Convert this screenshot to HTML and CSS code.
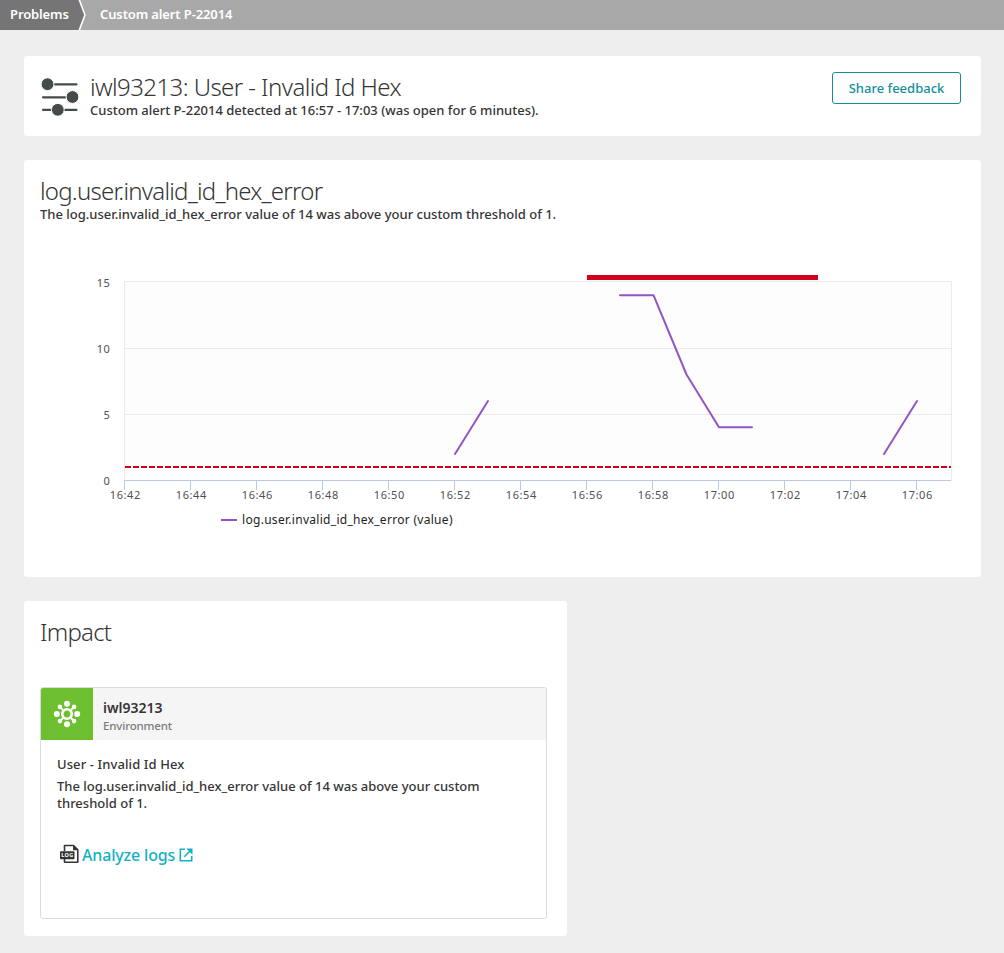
FILE: index.html
```html
<!DOCTYPE html>
<html lang="en">
<head>
<meta charset="utf-8">
<title>Custom alert P-22014</title>
<link rel="stylesheet" href="styles.css">
</head>
<body>
<nav class="crumbs">
  <a class="crumb crumb-root">Problems</a>
  <svg class="crumb-arrow" width="10" height="30" viewBox="0 0 10 30"><path d="M0 0H2L8 15L2 30H0Z" fill="#757575"/><path d="M1 -1L7 15L1 31" fill="none" stroke="#fff" stroke-width="1.7"/></svg>
  <span class="crumb crumb-current">Custom alert P-22014</span>
</nav>
<main class="page">
  <section class="card header">
    <svg class="header-icon" width="38" height="40" viewBox="0 0 38 40"><g stroke="#454b4b" stroke-width="2.2" stroke-linecap="round"><path d="M8 8.3H35.5M2 21.3H32M2 33.8H35.5"/></g><g fill="#454b4b" stroke="#fff" stroke-width="1"><circle cx="6.5" cy="8.2" r="6.4"/><circle cx="31.5" cy="21" r="6.4"/><circle cx="16.8" cy="33.8" r="6.4"/></g></svg>
    <div class="header-text">
      <h1 class="title title-main">iwl93213: User - Invalid Id Hex</h1>
      <p class="text text-detected">Custom alert P-22014 detected at 16:57 - 17:03 (was open for 6 minutes).</p>
    </div>
    <button class="feedback">Share feedback</button>
  </section>

  <section class="card metric">
    <h2 class="title title-metric">log.user.invalid_id_hex_error</h2>
    <p class="text text-metric">The log.user.invalid_id_hex_error value of 14 was above your custom threshold of 1.</p>
    <svg class="chart" width="957" height="290" viewBox="24 257 957 290">
      <rect x="124.500" y="281.500" width="827" height="199" fill="#fdfdfd" stroke="#ebebeb"/>
      <path d="M125 348.500H951M125 414.500H951" stroke="#ebebeb"/>
      <path d="M124 480.500H951M124.500 480V490M190.500 480V490M256.500 480V490M322.500 480V490M388.500 480V490M454.500 480V490M520.500 480V490M586.500 480V490M652.500 480V490M718.500 480V490M784.500 480V490M850.500 480V490M916.500 480V490" stroke="#b9c9e6"/>
      <path d="M125 467H951" stroke="#d0021b" stroke-width="2" stroke-dasharray="6 2"/>
      <rect x="587" y="275" width="231" height="5" fill="#d0021b"/>
      <g fill="none" stroke="#9355c1" stroke-width="2" stroke-linejoin="round" stroke-linecap="round">
        <path d="M455 454L488 401"/><path d="M620 295.200H653.500L686.500 374.500L719 427.300H752"/><path d="M884 454L917 401"/>
      </g>
      <g class="axis" text-anchor="end"><text x="110" y="287">15</text><text x="110" y="353">10</text><text x="110" y="419">5</text><text x="110" y="485">0</text></g>
      <g class="axis axis-time" text-anchor="middle"><text x="125.300" y="499">16:42</text><text x="191.300" y="499">16:44</text><text x="257.300" y="499">16:46</text><text x="323.300" y="499">16:48</text><text x="389.300" y="499">16:50</text><text x="455.300" y="499">16:52</text><text x="521.300" y="499">16:54</text><text x="587.300" y="499">16:56</text><text x="653.300" y="499">16:58</text><text x="719.300" y="499">17:00</text><text x="785.300" y="499">17:02</text><text x="851.300" y="499">17:04</text><text x="917.300" y="499">17:06</text></g>
      <path d="M221 520H237" stroke="#9355c1" stroke-width="2"/>
      <text class="legend" x="242" y="524" textLength="210.500">log.user.invalid_id_hex_error (value)</text>
    </svg>
  </section>

  <section class="card impact">
    <h2 class="title title-impact">Impact</h2>
    <article class="entity">
      <header class="entity-head">
        <div class="entity-icon"><svg width="28" height="28" viewBox="-14 -14 28 28"><g stroke="#fff" stroke-width="1.800"><path d="M-7 -7L7 7M7 -7L-7 7"/></g><circle r="4.800" fill="#6dbf30" stroke="#fff" stroke-width="2.600"/><g fill="#fff"><circle cy="-10.200" r="3"/><circle cy="10.200" r="3"/><circle cx="-10.200" r="3"/><circle cx="10.200" r="3"/><circle cx="-7.100" cy="-7.100" r="2.300"/><circle cx="7.100" cy="-7.100" r="2.300"/><circle cx="-7.100" cy="7.100" r="2.300"/><circle cx="7.100" cy="7.100" r="2.300"/></g></svg></div>
        <div class="entity-label"><div class="entity-name">iwl93213</div><div class="entity-type">Environment</div></div>
      </header>
      <div class="entity-body">
        <p class="text text-event">User - Invalid Id Hex</p>
        <p class="text text-reason">The log.user.invalid_id_hex_error value of 14 was above your custom<br><span class="text-reason-end">threshold of 1.</span></p>
        <a class="logs">
          <svg class="logs-icon" width="19" height="20" viewBox="0 0 19 20"><path d="M4.500 7V1.500H13.500L17.800 5.800V18.300H4.500V15" fill="none" stroke="#353535" stroke-width="1.600" stroke-linejoin="round"/><path d="M13 1L18.300 6.300H13Z" fill="#353535"/><rect y="7.200" width="14.500" height="8" rx="1" fill="#353535"/><text class="log-badge" x="1.300" y="13.400" textLength="12">LOG</text></svg>
          <span class="logs-label">Analyze logs</span>
          <svg width="14" height="14" viewBox="0 0 14 14"><path d="M6 1.300H1.300V12.700H12.700V8M5.300 8.700L11 3" fill="none" stroke="#14b0c6" stroke-width="1.600"/><path d="M7.300 .5H13.500V6.700Z" fill="#14b0c6"/></svg>
        </a>
      </div>
    </article>
  </section>
</main>
</body>
</html>
```
FILE: styles.css
```css
* { box-sizing: border-box; }
body { margin: 0; height: 953px; background: #eee; color: #353535; font-family: "Noto Sans", "Open Sans", sans-serif; }
h1, h2, p { margin: 0; white-space: nowrap; }
.crumbs { display: flex; height: 30px; background: #a8a8a8; color: #fff; font-size: 13px; font-weight: 600; line-height: 28px; letter-spacing: -.12px; }
.crumb { white-space: nowrap; }
.crumb-root { width: 78px; padding-left: 10px; background: #757575; }
.crumb-current { padding-left: 12px; }
.page { display: flex; flex-direction: column; gap: 24px; padding: 26px 23px 17px 24px; }
.card { background: #fff; border-radius: 3px; }
.header { display: flex; height: 80px; padding: 16px 20px 0 17px; }
.header-icon { margin-top: 4px; }
.header-text { flex: 1; margin-left: 11px; }
.title { font-weight: 300; font-size: 24px; line-height: 30px; }
.title-main { letter-spacing: -.58px; }
.title-metric { letter-spacing: -.76px; }
.title-impact { letter-spacing: -.75px; }
.text { font-weight: 500; font-size: 13px; line-height: 17px; }
.text-event { letter-spacing: .1px; }
.feedback { width: 129px; height: 32px; padding: 0; border: 1px solid #128f9b; border-radius: 3px; background: #fff; color: #128f9b; font: 500 13px "Noto Sans", sans-serif; white-space: nowrap; }
.metric { height: 417px; padding-top: 16px; }
.metric .title, .metric .text { margin-left: 16px; }
.chart { display: block; margin-top: 34px; }
.axis { font: 11px "Noto Sans", sans-serif; fill: #505050; letter-spacing: .3px; }
.axis-time { letter-spacing: .6px; }
.legend { font: 12px "Noto Sans", sans-serif; fill: #222; }
.impact { width: 543px; height: 335px; padding: 16px; }
.entity { width: 507px; height: 232px; margin-top: 40px; border: 1px solid #dcdcdc; border-radius: 3px; overflow: hidden; }
.entity-head { display: flex; height: 52px; background: #f5f5f5; }
.entity-icon { display: flex; align-items: center; justify-content: center; width: 52px; background: #6dbf30; }
.entity-label { padding: 10px 0 0 10px; }
.entity-name { font-size: 14px; font-weight: 600; line-height: 19px; }
.entity-type { color: #7c7c7c; font-size: 11.5px; font-weight: 500; line-height: 18px; letter-spacing: -.15px; }
.entity-body { padding: 16px; }
.text-reason { margin-top: 5px; }
.logs { display: flex; align-items: center; margin: 32px 0 0 3px; color: #14b0c6; }
.logs-icon { margin-top: -2px; }
.logs-label { margin: 0 4px 0 3px; font-size: 16px; font-weight: 500; line-height: 22px; letter-spacing: -.17px; white-space: nowrap; }
.log-badge { font: bold 5.5px "Noto Sans", sans-serif; fill: #fff; }
```
